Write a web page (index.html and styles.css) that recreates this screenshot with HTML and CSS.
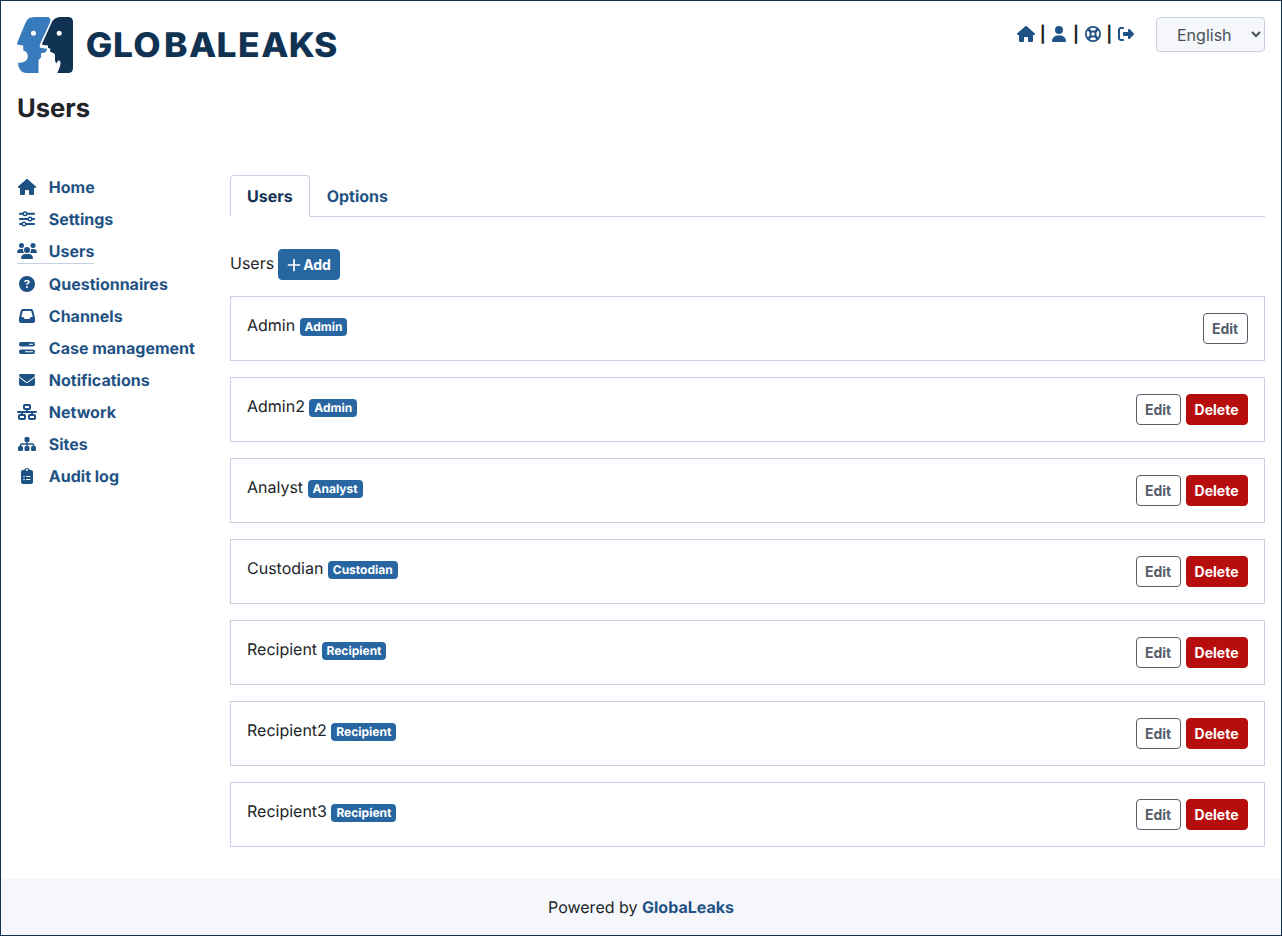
FILE: index.html
```html
<!DOCTYPE html>
<html lang="en">
<head>
<meta charset="utf-8">
<title>GlobaLeaks - Users</title>
<link rel="stylesheet" href="styles.css">
</head>
<body>
<div class="page">
  <header class="header">
    <svg class="logo" width="322" height="56" viewBox="0 0 322 56" role="img" aria-label="GlobaLeaks">
      <path fill="#377bbc" d="M13 .8Q15.500 0 19 0H30Q34.800 .5 33 5.500L23.300 26.500Q22 29.500 23.500 30.700L29.700 31.700Q30.500 34 28 35.500L24 36.200V40.500L21.500 43V56H9Q4 55.500 2.200 51Q.8 48 1.300 45.500C5 46.300 10.800 44.500 10.800 39.500Q10.800 34.500 6.300 33.500L6.200 28.500L1 27.700Q-.3 27 .2 25.800L8 7Q10 2 13 .8Z"/>
      <path fill="#103253" d="M38 1.500Q40 0 43 0H51Q56 0 56 5V51Q56 56 51 56H40.200Q43.500 50 43.500 45.500Q43.300 43 41.200 43.500L39.200 46.500L38 43.500V38Q37.500 35.800 35.500 35.700L32.800 34.300L33.500 31.800L31 31V28.600L25.500 28L25.200 26.500L34 7Q35.500 3 38 1.500Z"/>
      <circle cx="16.500" cy="16.300" r="2.500" fill="#fff"/><circle cx="42.200" cy="16.300" r="2.500" fill="#fff"/>
      <text class="wordmark" transform="scale(1.040 1)" x="66.200 92.200 111.900 141.300 165.500 191.900 212.400 234.900 261.200 285.600" y="40">GLOBALEAKS</text>
    </svg>
    <div class="tools">
      <a class="tool"><svg class="icon" viewBox="0 0 576 512"><path id="house" d="M575.8 255.500c0 18-15 32.100-32 32.100h-32l.7 160.200c0 2.700-.2 5.400-.5 8.100V472c0 22.100-17.900 40-40 40H392c-22.100 0-40-17.900-40-40v-88c0-17.700-14.300-32-32-32h-64c-17.700 0-32 14.300-32 32v88c0 22.100-17.900 40-40 40h-80c-22.100 0-40-17.900-40-40V287.600H32c-18 0-32-14-32-32.100 0-9 3-17 10-24L266.400 8c7-7 15-8 22-8s15 2 21 7l255.400 224.500c8 7 12 15 11 24z"/></svg></a>
      <span class="pipe">|</span>
      <a class="tool"><svg class="icon" viewBox="0 0 448 512"><path d="M224 256A128 128 0 1 0 224 0a128 128 0 1 0 0 256zm-45.700 48C79.800 304 0 383.800 0 482.300 0 498.700 13.300 512 29.700 512h388.600c16.400 0 29.700-13.300 29.700-29.700 0-98.500-79.800-178.300-178.300-178.300z"/></svg></a>
      <span class="pipe">|</span>
      <a class="tool"><svg class="icon line" viewBox="0 0 512 512" stroke-width="56"><circle cx="256" cy="256" r="228"/><circle cx="256" cy="256" r="86"/><path stroke-width="84" d="M110 110l84 84M402 110l-84 84M110 402l84-84M402 402l-84-84"/></svg></a>
      <span class="pipe">|</span>
      <a class="tool"><svg class="icon" viewBox="0 0 512 512"><path d="M377.900 105.900l122.800 122.800c7.200 7.200 11.300 17.100 11.300 27.300s-4.100 20.100-11.300 27.300L377.900 406.100c-6.400 6.400-15 9.900-24 9.900-18.700 0-33.900-15.200-33.900-33.900V320H192c-17.700 0-32-14.300-32-32v-64c0-17.700 14.300-32 32-32h128v-62.100c0-18.700 15.200-33.900 33.900-33.900 9 0 17.600 3.600 24 9.900zM160 96H96c-17.700 0-32 14.300-32 32v256c0 17.700 14.300 32 32 32h64c17.700 0 32 14.300 32 32s-14.300 32-32 32H96c-53 0-96-43-96-96V128c0-53 43-96 96-96h64c17.700 0 32 14.300 32 32s-14.300 32-32 32z"/></svg></a>
      <select class="language" aria-label="Language"><option>English</option></select>
    </div>
  </header>
  <h1 class="title">Users</h1>
  <div class="columns">
    <nav class="sidebar">
      <a class="nav-item"><span class="nav-icon"><svg class="icon" viewBox="0 0 576 512"><use href="#house"/></svg></span>Home</a>
      <a class="nav-item"><span class="nav-icon"><svg class="icon line" viewBox="0 0 512 512" stroke-width="60" stroke-linecap="round"><path d="M28 88h96m136 0h224M28 256h256m136 0h64M28 416h64m136 0h256"/><g stroke-width="46"><circle cx="192" cy="88" r="58"/><circle cx="352" cy="256" r="58"/><circle cx="160" cy="416" r="58"/></g></svg></span>Settings</a>
      <a class="nav-item active"><span class="nav-icon"><svg class="icon" viewBox="0 0 640 512"><path d="M144 0a80 80 0 1 1 0 160A80 80 0 1 1 144 0zM512 0a80 80 0 1 1 0 160A80 80 0 1 1 512 0zM0 298.700C0 239.800 47.800 192 106.700 192h42.700c15.900 0 31 3.500 44.600 9.700-1.300 7.200-1.900 14.700-1.900 22.300 0 38.200 16.800 72.500 43.300 96H21.300C9.600 320 0 310.400 0 298.700zM404.600 320c26.600-23.500 43.300-57.800 43.300-96 0-7.600-.7-15-1.900-22.300 13.600-6.300 28.700-9.700 44.600-9.700h42.700C592.200 192 640 239.800 640 298.700c0 11.800-9.600 21.300-21.300 21.300zM224 224a96 96 0 1 1 192 0 96 96 0 1 1-192 0zM128 485.300C128 411.700 187.700 352 261.300 352h117.400C452.300 352 512 411.700 512 485.300c0 14.700-11.900 26.700-26.700 26.700H154.700c-14.700 0-26.700-11.900-26.700-26.700z"/></svg></span>Users</a>
      <a class="nav-item"><span class="nav-icon"><svg class="icon" viewBox="0 0 512 512"><path d="M256 512A256 256 0 1 0 256 0a256 256 0 1 0 0 512zM169.800 165.300c7.900-22.300 29.100-37.300 52.800-37.300h58.300c34.900 0 63.100 28.300 63.100 63.100 0 22.600-12.100 43.500-31.700 54.800L280 264.400c-.2 13-10.900 23.600-24 23.600-13.300 0-24-10.700-24-24v-13.500c0-8.600 4.600-16.500 12.100-20.800l44.300-25.400c4.700-2.700 7.600-7.700 7.600-13.100 0-8.400-6.800-15.100-15.100-15.100h-58.300c-3.400 0-6.400 2.100-7.500 5.300l-.4 1.200c-4.400 12.500-18.200 19-30.600 14.600s-19-18.200-14.600-30.600zM224 352a32 32 0 1 1 64 0 32 32 0 1 1-64 0z" fill-rule="evenodd"/></svg></span>Questionnaires</a>
      <a class="nav-item"><span class="nav-icon"><svg class="icon" viewBox="0 0 512 512"><path d="M121 32C91.600 32 66 52 58.900 80.500l-57 227.900C.6 313.500 0 318.700 0 323.900V416c0 35.300 28.700 64 64 64h384c35.300 0 64-28.700 64-64v-92.100c0-5.200-.6-10.400-1.900-15.500l-57-227.900C446 52 420.400 32 391 32zm0 64h270l48 192h-51.200c-12.100 0-23.200 6.800-28.600 17.700l-14.300 28.600c-5.400 10.800-16.500 17.700-28.600 17.700H195.800c-12.100 0-23.200-6.800-28.600-17.700l-14.300-28.600c-5.400-10.800-16.500-17.700-28.600-17.700H73z" fill-rule="evenodd"/></svg></span>Channels</a>
      <a class="nav-item"><span class="nav-icon"><svg class="icon" viewBox="0 0 512 512"><path fill-rule="evenodd" d="M64 64h384q64 0 64 64v16q0 64-64 64H64q-64 0-64-64v-16q0-64 64-64zM320 118v36h128v-36zM64 304h384q64 0 64 64v16q0 64-64 64H64q-64 0-64-64v-16q0-64 64-64zM192 358v36h256v-36z"/></svg></span>Case management</a>
      <a class="nav-item"><span class="nav-icon"><svg class="icon" viewBox="0 0 512 512"><path d="M48 64C21.500 64 0 85.500 0 112c0 15.100 7.100 29.300 19.200 38.400l217.600 163.200c11.400 8.500 27 8.500 38.400 0l217.600-163.200c12.100-9.100 19.200-23.300 19.200-38.400 0-26.500-21.500-48-48-48zM0 176v208c0 35.300 28.700 64 64 64h384c35.300 0 64-28.700 64-64V176L294.400 339.200c-22.800 17.100-54 17.100-76.800 0z"/></svg></span>Notifications</a>
      <a class="nav-item"><span class="nav-icon"><svg class="icon line" viewBox="0 0 640 512" stroke-width="64"><rect x="224" y="32" width="192" height="128" rx="22"/><rect x="64" y="352" width="192" height="128" rx="22"/><rect x="384" y="352" width="192" height="128" rx="22"/><path stroke-linecap="round" d="M32 256h576"/><path d="M320 176v80M160 256v80M480 256v80"/></svg></span>Network</a>
      <a class="nav-item"><span class="nav-icon"><svg class="icon" viewBox="0 0 576 512"><rect x="208" y="32" width="160" height="160" rx="48"/><rect y="320" width="160" height="160" rx="48"/><rect x="208" y="320" width="160" height="160" rx="48"/><rect x="416" y="320" width="160" height="160" rx="48"/><path fill="none" stroke="currentColor" stroke-width="48" d="M288 180v150M80 330v-42q0-32 32-32h352q32 0 32 32v42"/></svg></span>Sites</a>
      <a class="nav-item"><span class="nav-icon"><svg class="icon" viewBox="0 0 384 512"><path fill-rule="evenodd" d="M192 0c-42 0-77 27-90.500 64H64Q0 64 0 128v320q0 64 64 64h256q64 0 64-64V128q0-64-64-64h-37.500C269 27 234 0 192 0zM160 64a32 32 0 1 1 64 0 32 32 0 1 1-64 0zM72 272a24 24 0 1 1 48 0 24 24 0 1 1-48 0zM176 256h112q16 0 16 16t-16 16H176q-16 0-16-16t16-16zM72 368a24 24 0 1 1 48 0 24 24 0 1 1-48 0zM176 352h112q16 0 16 16t-16 16H176q-16 0-16-16t16-16z"/></svg></span>Audit log</a>
    </nav>
    <main class="main">
      <div class="tabs"><a class="tab selected">Users</a><a class="tab">Options</a></div>
      <div class="add-row"><span>Users</span><button class="btn primary"><svg class="plus" viewBox="0 0 14 14"><path d="M7 1.500v11M1.500 7h11"/></svg>Add</button></div>
      <div class="cards">
        <div class="card"><div>Admin <span class="badge">Admin</span></div><div class="actions"><button class="btn outline">Edit</button></div></div>
        <div class="card"><div>Admin2 <span class="badge">Admin</span></div><div class="actions"><button class="btn outline">Edit</button><button class="btn danger">Delete</button></div></div>
        <div class="card"><div>Analyst <span class="badge">Analyst</span></div><div class="actions"><button class="btn outline">Edit</button><button class="btn danger">Delete</button></div></div>
        <div class="card"><div>Custodian <span class="badge">Custodian</span></div><div class="actions"><button class="btn outline">Edit</button><button class="btn danger">Delete</button></div></div>
        <div class="card"><div>Recipient <span class="badge">Recipient</span></div><div class="actions"><button class="btn outline">Edit</button><button class="btn danger">Delete</button></div></div>
        <div class="card"><div>Recipient2 <span class="badge">Recipient</span></div><div class="actions"><button class="btn outline">Edit</button><button class="btn danger">Delete</button></div></div>
        <div class="card"><div>Recipient3 <span class="badge">Recipient</span></div><div class="actions"><button class="btn outline">Edit</button><button class="btn danger">Delete</button></div></div>
      </div>
    </main>
  </div>
  <footer class="footer">Powered by&nbsp;<a class="footer-link">GlobaLeaks</a></footer>
</div>
</body>
</html>
```
FILE: styles.css
```css
* { box-sizing: border-box; }
body { margin: 0; background: #fff; color: #212529; font: 16px/24px Inter, sans-serif; text-rendering: geometricPrecision; }
.page { display: flex; flex-direction: column; height: 936px; border: 1px solid #103253; }
.header { display: flex; justify-content: space-between; align-items: flex-start; height: 72px; padding: 16px 16px 0; }
.logo { display: block; }
.wordmark { font: 800 34px Inter, sans-serif; fill: #103253; }
.tools { display: flex; align-items: flex-start; height: 35px; color: #1f5284; }
.tool { display: flex; justify-content: center; width: 20px; padding-top: 9px; }
.icon { display: block; height: 16px; fill: currentColor; overflow: visible; }
.icon.line { fill: none; stroke: currentColor; }
.pipe { width: 13.330px; padding-top: 5px; text-align: center; color: #212529; font-weight: 700; line-height: 24px; }
.language { width: 109px; height: 35px; margin-left: 20px; padding: 0 0 0 16px; border: 1px solid #c8d1e3; border-radius: 4px; background: #f5f7fb; color: #495057; font: 16px Inter, sans-serif; }
.title { margin: 20px 16px 0; font-size: 25.600px; line-height: 31px; font-weight: 700; }
.columns { display: flex; flex: 1; padding: 51px 16px 0; }
.sidebar { display: flex; flex-direction: column; align-items: flex-start; width: 213px; }
.nav-item { display: flex; align-items: center; height: 24px; margin-bottom: 8px; color: #1f5284; font-weight: 700; }
.nav-item.active { height: 25px; border-bottom: 1px solid #c8d1e3; }
.nav-icon { display: flex; justify-content: center; width: 20px; margin-right: 11.800px; }
.main { flex: 1; }
.tabs { display: flex; height: 42px; border-bottom: 1px solid #c8d1e3; }
.tab { height: 42px; padding: 9px 17px; color: #1f5284; font-weight: 700; }
.tab.selected { padding: 8px 16px; border: 1px solid #c8d1e3; border-bottom-color: #fff; border-radius: 4px 4px 0 0; background: #fff; color: #103253; }
.add-row { display: flex; gap: 4px; margin-top: 32px; line-height: 28px; }
.btn { display: flex; align-items: center; height: 31px; padding: 0 8px; border: 1px solid; border-radius: 4px; font: 700 14px/21px Inter, sans-serif; }
.primary { width: 62px; background: #2866a2; border-color: #2866a2; color: #fff; }
.outline { width: 45px; background: #fff; border-color: #565e6c; color: #565e6c; }
.danger { width: 62px; padding: 0 7.600px; background: #b80d0d; border-color: #b80d0d; color: #fff; }
.plus { flex: none; width: 14px; height: 14px; margin-right: 2px; fill: none; stroke: #fff; stroke-width: 1.700; stroke-linecap: round; }
.cards { display: flex; flex-direction: column; gap: 16px; margin-top: 16px; }
.card { display: flex; justify-content: space-between; height: 65px; padding: 16px; border: 1px solid #c8d1e3; }
.badge { display: inline-block; padding: 3px 4.900px; border-radius: 4px; background: #2866a2; color: #fff; font-size: 12px; font-weight: 700; line-height: 12px; vertical-align: baseline; }
.actions { display: flex; gap: 5px; }
.footer { display: flex; align-items: center; justify-content: center; height: 56px; background: #f5f7fb; }
.footer-link { color: #1f5284; font-weight: 700; }
```
